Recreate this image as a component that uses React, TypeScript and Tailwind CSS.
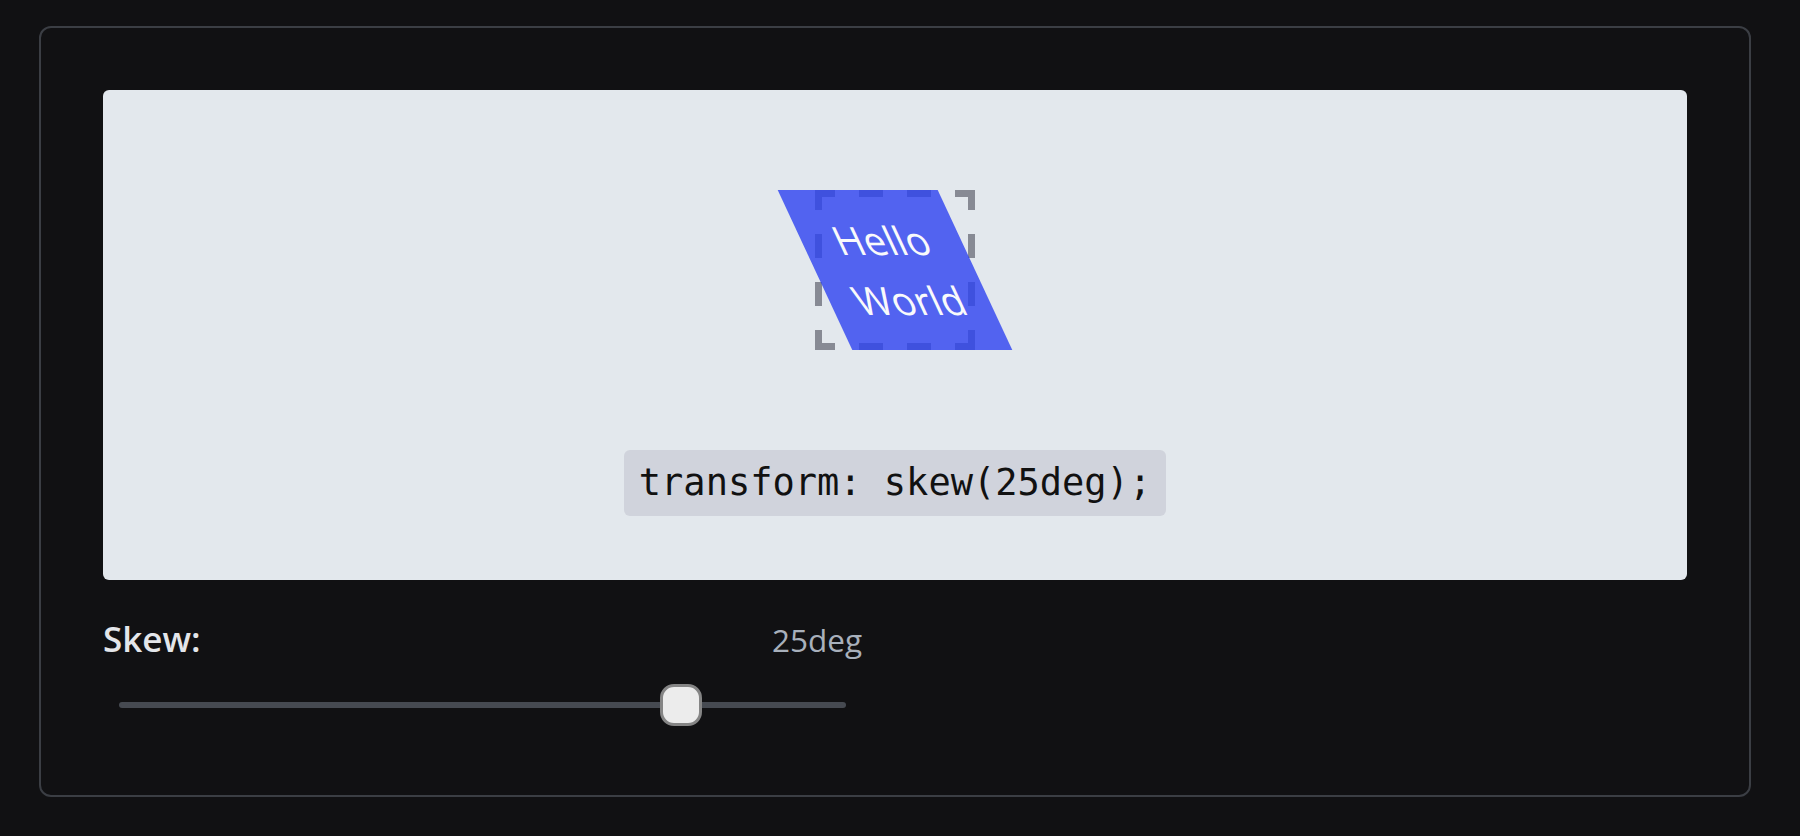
// Skew demo: preview panel with a skewed box, plus a slider control
const skew = 25;
const min = -45;
const max = 45;

// dash segments along each 160px edge: [start, length]
const segs: [number, number][] = [
  [0, 20],
  [44, 24],
  [92, 24],
  [140, 20],
];

function DashedOutline() {
  const t = 7;
  return (
    <svg
      className="absolute inset-0"
      width="160"
      height="160"
      viewBox="0 0 160 160"
      fill="#878a94"
    >
      {segs.map(([s, l]) => (
        <g key={s}>
          <rect x={s} y={0} width={l} height={t} />
          <rect x={s} y={160 - t} width={l} height={t} />
          <rect x={0} y={s} width={t} height={l} />
          <rect x={160 - t} y={s} width={t} height={l} />
        </g>
      ))}
    </svg>
  );
}

export default function App() {
  const pct = ((skew - min) / (max - min)) * 100;

  return (
    <div className="min-h-screen bg-[#111113] pt-[26px] pl-[39px] font-['Open_Sans',sans-serif]">
      <div className="w-[1712px] h-[771px] rounded-xl border-2 border-[#3b3e44] p-[62px]">
        {/* preview */}
        <div className="rounded-md bg-[#e3e8ed] flex flex-col items-center pt-[100px] pb-[64px]">
          <div className="relative w-[160px] h-[160px]">
            <DashedOutline />
            <div className="absolute inset-0 skew-x-[25deg] bg-[#2e43f1] opacity-80 flex items-center justify-center text-center text-white text-[39px] leading-[60px] font-normal">
              Hello World
            </div>
          </div>
          <code className="mt-[100px] h-[66px] flex items-center px-[15px] rounded-md bg-[#d0d3dc] text-[#111111] text-[37px] font-['DejaVu_Sans_Mono',monospace] whitespace-pre">
            transform: skew({skew}deg);
          </code>
        </div>

        {/* controls */}
        <div className="mt-[39px] w-[759px]">
          <div className="flex justify-between items-baseline">
            <span className="text-[35px] leading-[40px] font-semibold text-[#e4e6ea]">
              Skew:
            </span>
            <span className="text-[31.5px] leading-[40px] text-[#a8b0bb]">
              {skew}deg
            </span>
          </div>
          <div className="mt-[24px] px-[16px]">
            <div className="relative h-[42px] flex items-center">
              <div className="w-full h-[6px] rounded-full bg-[#464a51]" />
              <div
                className="absolute top-0 w-[42px] h-[42px] rounded-[14px] bg-[#ececec] border-[3px] border-[#858585]"
                style={{ left: `calc(${pct}% - 24px)` }}
              />
            </div>
          </div>
        </div>
      </div>
    </div>
  );
}
